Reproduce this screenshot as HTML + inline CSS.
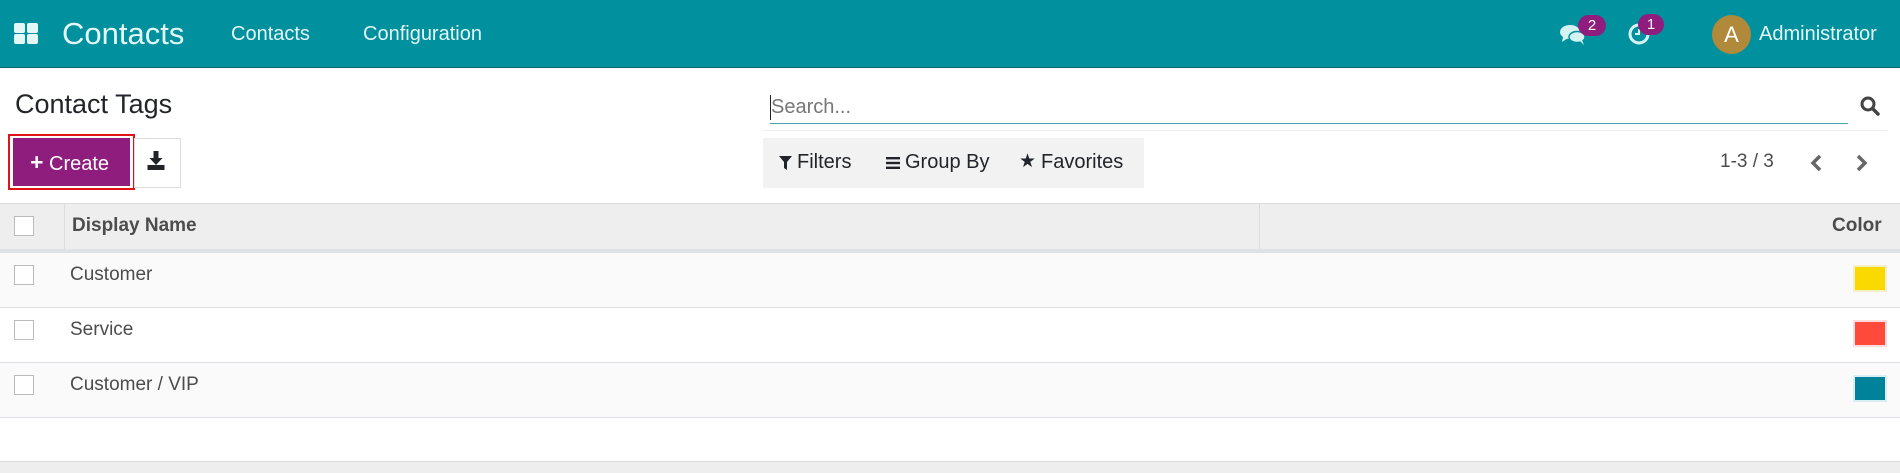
<!DOCTYPE html>
<html><head><meta charset="utf-8"><style>
*{box-sizing:border-box;margin:0;padding:0}
body{width:1900px;height:473px;overflow:hidden;background:#fff;font-family:"Liberation Sans",sans-serif;position:relative;color:#4c4c4c}
.a{position:absolute;white-space:nowrap}
.nav{position:absolute;left:0;top:0;width:1900px;height:68px;background:#00909e;border-bottom:1px solid #0a6670}
.cb{position:absolute;left:14px;width:20px;height:20px;border:1px solid #bbb;background:#fff}
.row{position:absolute;left:0;width:1900px;border-bottom:1px solid #dee2e6}
.sw{position:absolute;left:1853px;width:34px;height:27px;border:2px solid #f0f0f0}
.sq{position:absolute;width:11px;height:10px;background:#e4f7f7;border-radius:2px}
</style></head><body>
<div class="nav">
  <div class="sq" style="left:14px;top:23px"></div>
  <div class="sq" style="left:27px;top:23px"></div>
  <div class="sq" style="left:14px;top:34px"></div>
  <div class="sq" style="left:27px;top:34px"></div>
  <div class="a" style="left:62px;top:16px;font-size:31px;color:#e4f7f7">Contacts</div>
  <div class="a" style="left:231px;top:23px;font-size:20px;color:#e4f7f7">Contacts</div>
  <div class="a" style="left:363px;top:23px;font-size:20px;color:#e4f7f7">Configuration</div>
  <svg class="a" style="left:1560px;top:24px" width="26" height="22" viewBox="0 0 26 22"><ellipse cx="10" cy="8" rx="10" ry="7" fill="#d6f3f3"/><path d="M3 13 L2 18 L8 14Z" fill="#d6f3f3"/><ellipse cx="17" cy="13" rx="8" ry="5.5" fill="#d6f3f3" stroke="#00909e" stroke-width="1.5"/><path d="M20 17 L24 21 L22 16Z" fill="#d6f3f3"/></svg>
  <div class="a" style="left:1578px;top:15px;width:28px;height:21px;border-radius:11px;background:#8f1d7e;color:#fff;font-size:15px;text-align:center;line-height:21px">2</div>
  <svg class="a" style="left:1627px;top:23px" width="24" height="22" viewBox="0 0 24 22"><circle cx="12" cy="11" r="9" fill="none" stroke="#d6f3f3" stroke-width="3"/><path d="M12 6 V11 H8" stroke="#d6f3f3" stroke-width="2" fill="none"/></svg>
  <div class="a" style="left:1638px;top:14px;width:26px;height:21px;border-radius:11px;background:#8f1d7e;color:#fff;font-size:15px;text-align:center;line-height:21px">1</div>
  <div class="a" style="left:1712px;top:15px;width:39px;height:39px;border-radius:50%;background:#b0893a;color:#fff;font-size:22px;text-align:center;line-height:39px">A</div>
  <div class="a" style="left:1759px;top:23px;font-size:20px;color:#e4f7f7">Administrator</div>
</div>
<div class="a" style="left:15px;top:89px;font-size:27px;color:#212529">Contact Tags</div>
<div class="a" style="left:8px;top:134px;width:127px;height:56px;border:2px solid #e0131b"></div>
<div class="a" style="left:13px;top:138px;width:117px;height:48px;background:#8f1d7e;color:#fff;font-size:20px;line-height:48px;padding-left:17px"><b style="font-size:23px">+</b> Create</div>
<div class="a" style="left:134px;top:138px;width:47px;height:50px;border:1px solid #ddd"></div>
<svg class="a" style="left:146px;top:151px" width="20" height="20" viewBox="0 0 19 20"><path d="M7 0 H12 V7 H16 L9.5 14 L3 7 H7Z" fill="#212529"/><rect x="1" y="14" width="17" height="5" fill="#212529"/></svg>
<div class="a" style="left:771px;top:96px;font-size:20px;color:#777">Search...</div>
<div class="a" style="left:770px;top:95px;width:1px;height:25px;background:#222"></div>
<div class="a" style="left:770px;top:123px;width:1078px;height:1px;background:#4aa2ad"></div>
<div class="a" style="left:763px;top:130px;width:1124px;height:1px;background:#eee"></div>
<svg class="a" style="left:1860px;top:96px" width="20" height="20" viewBox="0 0 20 20"><circle cx="8" cy="8" r="6" fill="none" stroke="#444" stroke-width="3"/><path d="M12.5 12.5 L18 18" stroke="#444" stroke-width="3.5" stroke-linecap="round"/></svg>
<div class="a" style="left:763px;top:138px;width:381px;height:50px;background:#f2f2f2"></div>
<svg class="a" style="left:779px;top:156px" width="13" height="14" viewBox="0 0 13 14"><path d="M0 0 H13 L8 6 V14 L5 12 V6Z" fill="#212529"/></svg>
<div class="a" style="left:797px;top:151px;font-size:20px;color:#212529">Filters</div>
<svg class="a" style="left:886px;top:157px" width="14" height="12"><rect y="0" width="14" height="2.4" fill="#212529"/><rect y="4.8" width="14" height="2.4" fill="#212529"/><rect y="9.6" width="14" height="2.4" fill="#212529"/></svg>
<div class="a" style="left:905px;top:151px;font-size:20px;color:#212529">Group By</div>
<div class="a" style="left:1019px;top:150px;font-size:19px;color:#212529">★</div>
<div class="a" style="left:1041px;top:151px;font-size:20px;color:#212529">Favorites</div>
<div class="a" style="left:1720px;top:151px;font-size:19px;color:#4c4c4c">1-3 / 3</div>
<svg class="a" style="left:1809px;top:154px" width="14" height="18"><path d="M11 2 L4 9 L11 16" stroke="#666" stroke-width="3.5" fill="none"/></svg>
<svg class="a" style="left:1855px;top:154px" width="14" height="18"><path d="M3 2 L10 9 L3 16" stroke="#666" stroke-width="3.5" fill="none"/></svg>
<div class="a" style="left:0;top:203px;width:1900px;height:50px;background:#eee;border-top:1px solid #ddd;border-bottom:4px solid #dee2e6"></div>
<div class="a" style="left:64px;top:203px;width:1px;height:46px;background:#ddd"></div>
<div class="a" style="left:1259px;top:203px;width:1px;height:46px;background:#ddd"></div>
<div class="cb" style="top:216px"></div>
<div class="a" style="left:72px;top:215px;font-size:19px;font-weight:bold;color:#4c4c4c">Display Name</div>
<div class="a" style="left:1832px;top:215px;font-size:19px;font-weight:bold;color:#4c4c4c">Color</div>
<div class="row" style="top:253px;height:55px;background:#fafafa"></div>
<div class="row" style="top:308px;height:55px;background:#fff"></div>
<div class="row" style="top:363px;height:55px;background:#fafafa"></div>
<div class="cb" style="top:265px"></div><div class="cb" style="top:320px"></div><div class="cb" style="top:375px"></div>
<div class="a" style="left:70px;top:264px;font-size:19px">Customer</div>
<div class="a" style="left:70px;top:319px;font-size:19px">Service</div>
<div class="a" style="left:70px;top:374px;font-size:19px">Customer / VIP</div>
<div class="sw" style="top:265px;background:#f9d900;border-color:#f4efc6"></div>
<div class="sw" style="top:320px;background:#fd4a3a;border-color:#fbdcdc"></div>
<div class="sw" style="top:375px;background:#00829a;border-color:#d8eef2"></div>
<div class="a" style="left:0;top:461px;width:1900px;height:12px;background:#eee;border-top:1px solid #ddd"></div>
</body></html>
